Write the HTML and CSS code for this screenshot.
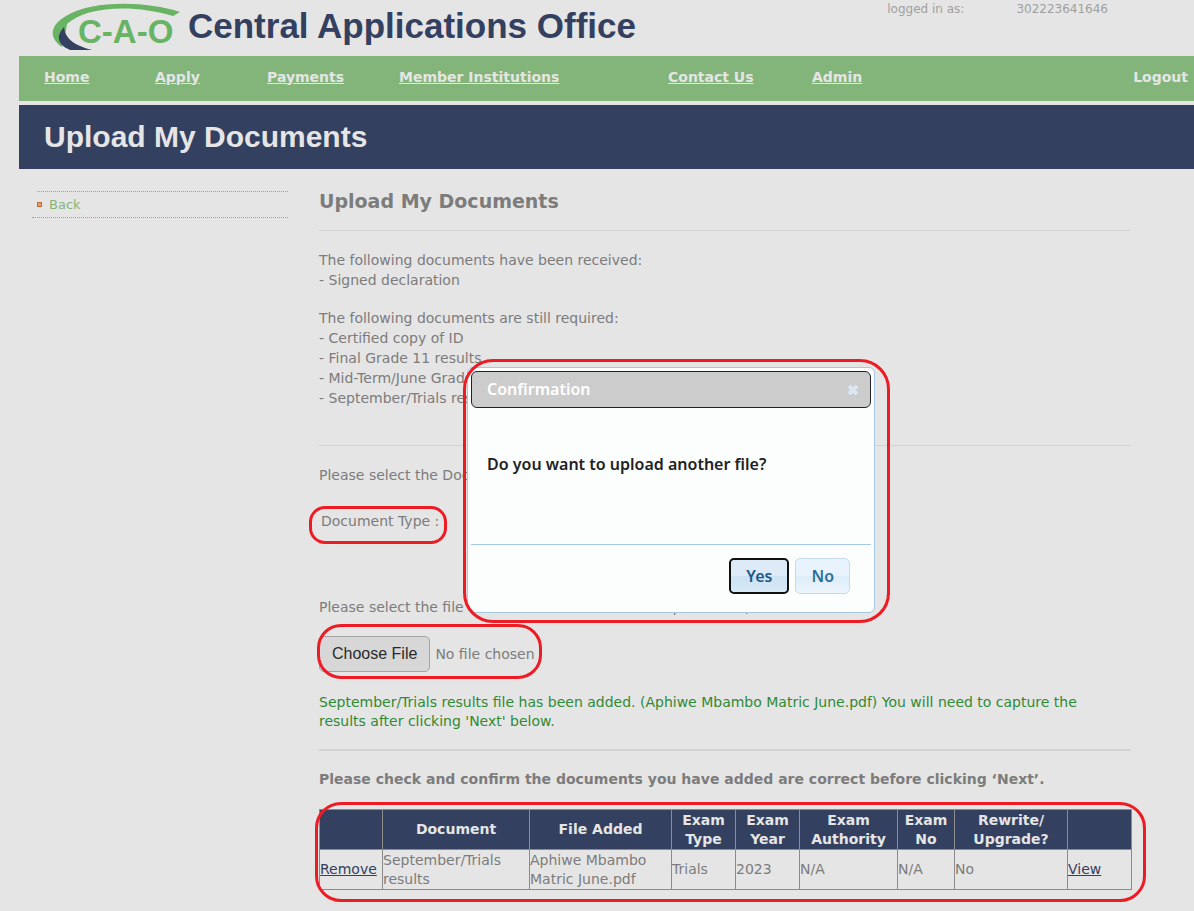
FILE: index.html
```html
<!DOCTYPE html>
<html lang="en">
<head>
<meta charset="utf-8">
<title>Central Applications Office - Upload My Documents</title>
<link rel="stylesheet" href="styles.css">
</head>
<body>
<header class="site-header">
  <svg class="logo" width="132" height="52" viewBox="50 0 132 52" role="img" aria-label="C-A-O">
    <path class="logo-green" d="M180 12C146 1 92 0 66 16C49 26 49 38 62 47L66 30L67 24C86 6 134 4 173 16Z"/>
    <path class="logo-navy" d="M64 27C56 36 57 44 70 50H92C77 46 65 40 64 27Z"/>
    <text class="logo-text" x="78" y="43">C-A-O</text>
  </svg>
  <div class="site-name">Central Applications Office</div>
  <div class="session"><span>logged in as:</span><span>302223641646</span></div>
</header>
<nav class="main-nav">
  <a href="#">Home</a>
  <a href="#">Apply</a>
  <a href="#">Payments</a>
  <a href="#">Member Institutions</a>
  <a href="#">Contact Us</a>
  <a href="#">Admin</a>
  <a class="logout" href="#">Logout</a>
</nav>
<h1 class="banner">Upload My Documents</h1>
<div class="columns">
  <aside class="sidebar"><a class="back" href="#">Back</a></aside>
  <main class="content">
    <h2 class="heading">Upload My Documents</h2>
    <section class="status">
      <p>The following documents have been received:<br>- Signed declaration</p>
      <p>The following documents are still required:<br>- Certified copy of ID<br>- Final Grade 11 results<br>- Mid-Term/June Grade<br>- September/Trials results</p>
    </section>
    <section class="form">
      <p>Please select the Document</p>
      <p class="doc-type mark">Document Type :</p>
      <label class="file-label" for="file">Please select the file for this document that is to upload now,</label>
      <div class="file-row mark"><input class="file" id="file" type="file"></div>
      <p class="success">September/Trials results file has been added. (Aphiwe Mbambo Matric June.pdf) You will need to capture the results after clicking 'Next' below.</p>
    </section>
    <section class="review">
      <p class="confirm">Please check and confirm the documents you have added are correct before clicking ‘Next’.</p>
      <div class="table-wrap mark">
        <table class="files">
          <colgroup><col class="w-remove"><col class="w-document"><col class="w-file"><col class="w-short"><col class="w-short"><col class="w-authority"><col class="w-no"><col class="w-rewrite"><col class="w-short"></colgroup>
          <thead><tr><th></th><th>Document</th><th>File Added</th><th>Exam Type</th><th>Exam Year</th><th>Exam Authority</th><th>Exam No</th><th>Rewrite/<br>Upgrade?</th><th></th></tr></thead>
          <tbody><tr><td><a href="#">Remove</a></td><td>September/Trials results</td><td>Aphiwe Mbambo Matric June.pdf</td><td>Trials</td><td>2023</td><td>N/A</td><td>N/A</td><td>No</td><td><a href="#">View</a></td></tr></tbody>
        </table>
      </div>
    </section>
  </main>
</div>
<div class="dialog mark" role="dialog" aria-labelledby="dialog-title">
  <div class="dialog-bar">
    <span id="dialog-title">Confirmation</span>
    <button class="close" type="button" aria-label="Close"><svg width="14" height="14" viewBox="0 0 14 14"><path d="M3 3L11 11M11 3L3 11"/></svg></button>
  </div>
  <p class="dialog-text">Do you want to upload another file?</p>
  <div class="dialog-actions">
    <button class="btn btn-yes" type="button">Yes</button>
    <button class="btn" type="button">No</button>
  </div>
</div>
</body>
</html>
```
FILE: styles.css
```css
*, *::before, *::after { box-sizing: border-box; }
body {
  margin: 0;
  padding: 0 0 20px 19px;
  background: #e5e5e5;
  color: #7c7c7c;
  font: 14px/20px Verdana, "DejaVu Sans", sans-serif;
}
p, h1, h2 { margin: 0; }

.site-header { display: flex; height: 56px; padding-left: 31px; }
.logo { flex: none; margin-right: 6px; }
.logo-green, .logo-text { fill: #68b364; }
.logo-navy { fill: #33405f; }
.logo-text { font: bold 33px "Liberation Sans", Arial, sans-serif; }
.site-name { color: #33405f; font: bold 35px/52px "Liberation Sans", Arial, sans-serif; white-space: nowrap; }
.session { display: flex; gap: 52px; margin-left: auto; padding-right: 86px; color: #a0a0a0; font-size: 12px; line-height: 18px; }

.main-nav {
  display: grid;
  grid-template-columns: 111px 112px 132px 269px 144px 1fr;
  grid-auto-flow: column;
  align-items: center;
  height: 45px;
  padding: 0 6px 4px 25px;
  background: #83b57b;
  font-weight: bold;
}
.main-nav a { color: #e5e5e5; }
.main-nav .logout { text-decoration: none; }
.banner { margin-top: 4px; padding-left: 25px; background: #33405f; color: #e5e5e5; font: bold 30px/64px "Liberation Sans", Arial, sans-serif; }

.columns { display: flex; gap: 31px; padding: 22px 63px 0 13px; }
.sidebar { position: relative; flex: none; width: 256px; }
.sidebar::before { content: ""; position: absolute; top: 0; right: 0; left: 5px; border-top: 1px dotted #a0a0a0; }
.back { display: flex; align-items: center; gap: 7px; height: 27px; padding-top: 1px; border-bottom: 1px dotted #a0a0a0; color: #83b57b; font-size: 13px; text-decoration: none; }
.back::before { content: ""; width: 5px; height: 5px; margin-left: 5px; border: 1px solid #c9682b; background: #e0a070; }
.content { flex: 1; min-width: 0; }

.heading { height: 40px; border-bottom: 1px solid #d2d2d2; font-size: 19px; line-height: 20px; }
.status { height: 215px; padding-top: 19px; border-bottom: 1px solid #d2d2d2; }
.status p + p { margin-top: 18px; }
.form { padding: 19px 0 18px; border-bottom: 2px solid #d2d2d2; }
.mark { position: relative; }
.mark::after { content: ""; position: absolute; border: 3px solid #ed1c24; pointer-events: none; }
.doc-type { width: max-content; margin-top: 26px; padding-left: 2px; }
.doc-type::after { inset: -5px -8px -13px -10px; border-radius: 16px; }
.file-label { display: block; margin-top: 66px; }
.file-row { width: max-content; margin-top: 19px; }
.file-row::after { inset: -12px -7px -7px -2px; border-radius: 24px; }
.file { display: block; width: 216px; height: 36px; color: #7c7c7c; font: 14px/36px Verdana, "DejaVu Sans", sans-serif; }
.file::file-selector-button { height: 36px; margin-right: 5px; padding: 0 12px; border: 1px solid #a4a4a4; border-radius: 5px; background: #d7d7d7; color: #2a2a2a; font: 16px "Liberation Sans", Arial, sans-serif; }
.success { margin-top: 21px; padding-right: 36px; color: #2f8a35; line-height: 19px; }

.review { padding-top: 18px; }
.confirm { font-weight: bold; }
.table-wrap { margin-top: 20px; }
.table-wrap::after { inset: -7px -15px -12px -4px; border-radius: 26px; }
.files { width: 100%; border-collapse: collapse; table-layout: fixed; line-height: 19px; }
.files tr { height: 40px; }
.files th, .files td { padding: 0; border: 1px solid #8b8b8b; }
.files th { background: #33405f; color: #e5e5e5; }
.files a { color: #33405f; }
.w-remove { width: 63px; }
.w-short { width: 64px; }
.w-document { width: 147px; }
.w-file { width: 142px; }
.w-authority { width: 98px; }
.w-no { width: 57px; }
.w-rewrite { width: 113px; }

.dialog {
  position: absolute;
  top: 367px;
  left: 467px;
  width: 408px;
  padding: 3px;
  border: 1px solid #a6c9e2;
  border-radius: 6px;
  background: #fcfdfd;
  color: #222;
  font: 600 16px/20px "Lucida Grande", "Noto Sans", sans-serif;
}
.dialog::after { inset: -9px -16px -11px -5px; border-radius: 30px; }
.dialog-bar { display: flex; align-items: center; justify-content: space-between; height: 37px; padding: 0 10px 2px 15px; border: 1px solid #222; border-radius: 6px; background: #ccc; color: #fff; }
.close { display: flex; padding: 2px 0 0; border: 0; background: none; }
.close path { fill: none; stroke: #d8e7f3; stroke-width: 4; }
.dialog-text { height: 136px; padding: 46px 16px 0; }
.dialog-actions { display: flex; justify-content: flex-end; gap: 6px; padding: 13px 21px 15px 0; border-top: 1px solid #a6c9e2; }
.btn { height: 36px; padding: 0 15px; border: 1px solid #c5dbec; border-radius: 5px; background: linear-gradient(#e8f3fd 0 50%, #dcecf9 50%, #edf5fc); color: #2e6e9e; font: 600 16px/20px "Lucida Grande", "Noto Sans", sans-serif; }
.btn-yes { border: 2px solid #101010; background: linear-gradient(#ddebf8 0 50%, #cde2f3 50%, #d8e9f7); color: #1d5987; }
```
